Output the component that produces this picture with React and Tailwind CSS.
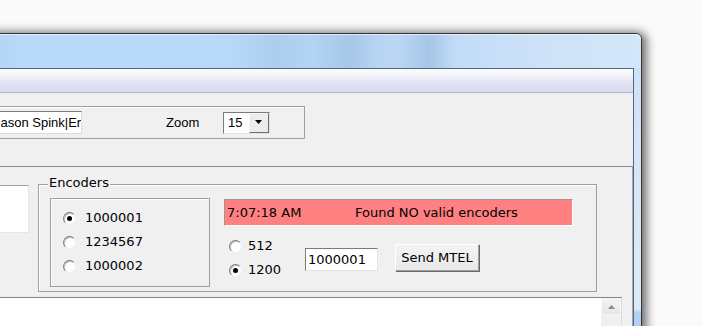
import React from "react";

const verdana = "font-['DejaVu_Sans',Verdana,sans-serif] text-[13px] text-black";
const arial = "font-['Liberation_Sans',Arial,sans-serif] text-[13px] text-black";

const Radio = ({ checked }) => (
  <span className="flex h-[13px] w-[13px] shrink-0 items-center justify-center rounded-full border border-t-[#7a7a7a] border-l-[#7a7a7a] border-r-[#ececec] border-b-[#ececec] bg-white shadow-[inset_1px_1px_0_#c4c4c4]">
    {checked && <span className="h-[5px] w-[5px] rounded-full bg-black" />}
  </span>
);

const RadioRow = ({ label, checked, gap }) => (
  <div className="flex h-[24px] items-center">
    <Radio checked={checked} />
    <span className={`${verdana} leading-[16px] ${gap}`}>{label}</span>
  </div>
);

const App = () => {
  const encoders = [
    { id: "1000001", checked: true },
    { id: "1234567", checked: false },
    { id: "1000002", checked: false },
  ];

  return (
    <div className="relative h-[326px] w-[702px] overflow-hidden bg-[#fafafa]">
      {/* window */}
      <div className="absolute left-[-21px] top-[33px] flex h-[320px] w-[663px] flex-col rounded-tr-[6px] border border-[#333] bg-[#b8d8f8] shadow-[4px_1px_10px_1px_rgba(0,0,0,0.5),0_-3px_9px_rgba(0,0,0,0.14)]">
        {/* title bar */}
        <div className="h-[34px] rounded-tr-[5px] bg-[#b8d8f8] bg-[linear-gradient(to_right,#b0d0f0_0%,#b9d9f9_6%,#b8d8f8_38%,#adcdee_45%,#b4d4f4_50%,#a7c7e9_56%,#b6d4f3_60%,#bbd7f4_63%,#a6c6e8_68%,#c2dcf7_72%,#cde2f8_85%,#d4e6f9_100%)] shadow-[inset_0_1px_0_rgba(255,255,255,0.6)]" />

        <div className="flex flex-1">
          {/* client area */}
          <div className="flex flex-1 flex-col border-t border-r border-[#56677a] bg-[#f0f0f0]">
            {/* menu strip */}
            <div className="h-[24px] border-b border-[#b0b4cc] bg-[#e6e8f5] bg-[linear-gradient(to_bottom,#fbfcfe_0%,#f1f3fa_30%,#e0e3f3_60%,#dadcf0_100%)]" />

            {/* upper area */}
            <div className="h-[73px] pt-[13px]">
              <div className="ml-[10px] flex h-[33px] w-[315px] items-center border border-[#a0a0a0] shadow-[inset_1px_1px_0_#fff]">
                <div className="ml-[2px] flex h-[23px] w-[89px] items-center overflow-hidden whitespace-nowrap border border-t-[#7a7a7a] border-l-[#7a7a7a] border-r-[#dcdcdc] border-b-[#dcdcdc] bg-white">
                  <span className={`${arial} leading-[16px]`}>Jason Spink|Er</span>
                </div>
                <span className={`${arial} ml-[84px] w-[57px] leading-[16px]`}>Zoom</span>
                <div className="flex h-[22px] w-[47px] items-center border border-t-[#7a7a7a] border-l-[#7a7a7a] border-r-[#e4e4e4] border-b-[#e4e4e4] bg-white">
                  <span className={`${arial} flex-1 pl-[4px] leading-[16px]`}>15</span>
                  <div className="flex h-[20px] w-[20px] items-center justify-center border border-t-[#f4f4f4] border-l-[#f4f4f4] border-r-[#6e6e6e] border-b-[#6e6e6e] bg-[#ececec]">
                    <svg width="8" height="5" viewBox="0 0 8 5">
                      <path d="M0 0H7L3.5 4Z" fill="#000" />
                    </svg>
                  </div>
                </div>
              </div>
            </div>

            {/* lower panel */}
            <div className="flex flex-1 flex-col border-t border-r border-t-[#8a8a8a] border-r-[#a9a9a9]">
              <div className="flex items-start">
                <div className="mt-[18px] h-[48px] w-[49px] border-t border-r border-b border-t-[#a0a0a0] border-r-[#e6e6e6] border-b-[#e6e6e6] bg-white" />

                {/* Encoders group */}
                <div className="relative ml-[9px] mt-[17px] h-[108px] w-[559px] border border-[#a0a0a0] shadow-[inset_1px_1px_0_#fff]">
                  <span className={`${verdana} absolute left-[9px] top-[-10px] bg-[#f0f0f0] px-[1px] leading-[16px]`}>
                    Encoders
                  </span>
                  <div className="flex pl-[11px] pt-[13px]">
                    <div className="flex h-[89px] w-[160px] flex-col border border-[#a0a0a0] pl-[12px] pt-[7px] shadow-[inset_1px_1px_0_#fff]">
                      {encoders.map((e) => (
                        <RadioRow key={e.id} label={e.id} checked={e.checked} gap="ml-[9px]" />
                      ))}
                    </div>

                    <div className="ml-[14px] mt-[1px] flex flex-col">
                      <div className="flex h-[27px] w-[349px] items-center border border-t-[#9a9a9a] border-l-[#9a9a9a] border-r-white border-b-white bg-[#ff8080] pl-[2px] whitespace-nowrap">
                        <span className={`${verdana} w-[128px] leading-[16px]`}>7:07:18 AM</span>
                        <span className={`${verdana} leading-[16px]`}>Found NO valid encoders</span>
                      </div>

                      <div className="mt-[8px] flex items-start">
                        <div className="ml-[5px] flex w-[76px] flex-col">
                          <RadioRow label="512" checked={false} gap="ml-[6px]" />
                          <RadioRow label="1200" checked={true} gap="ml-[6px]" />
                        </div>
                        <div className="mt-[14px] flex h-[23px] w-[73px] items-center border border-t-[#7a7a7a] border-l-[#7a7a7a] border-r-[#e4e4e4] border-b-[#e4e4e4] bg-white pl-[2px]">
                          <span className={`${verdana} leading-[16px]`}>1000001</span>
                        </div>
                        <button className="ml-[17px] mt-[10px] flex h-[27px] w-[84px] items-center justify-center border border-t-white border-l-white border-r-[#a0a0a0] border-b-[#a0a0a0] bg-[#eeeeee] bg-[linear-gradient(to_bottom,#f4f4f4,#e8e8e8)] shadow-[1px_1px_0_#696969]">
                          <span className={`${verdana} leading-[16px]`}>Send MTEL</span>
                        </button>
                      </div>
                    </div>
                  </div>
                </div>
              </div>

              {/* log textbox */}
              <div className="mt-[5px] flex w-[642px] flex-1 justify-end border-t border-r border-t-[#828282] border-r-[#dcdcdc] bg-white">
                <div className="flex w-[20px] flex-col bg-[#f0f0f0]">
                  <div className="flex h-[17px] items-center justify-center border border-[#f7f7f7] bg-[#ececec] bg-[linear-gradient(to_bottom,#f3f3f3,#e6e6e6)]">
                    <svg width="7" height="4" viewBox="0 0 7 4">
                      <path d="M0 4H7L3.5 0Z" fill="#8a8a8a" />
                    </svg>
                  </div>
                </div>
              </div>
            </div>
          </div>

          {/* right frame */}
          <div className="w-[7px] bg-[#d4e6f9] bg-[linear-gradient(to_bottom,#cde2f8_0%,#d9e8f9_55%,#dbe9f9_85%,#b2d2f4_86%,#b2d2f4_100%)]" />
        </div>
      </div>
    </div>
  );
};

export default App;
